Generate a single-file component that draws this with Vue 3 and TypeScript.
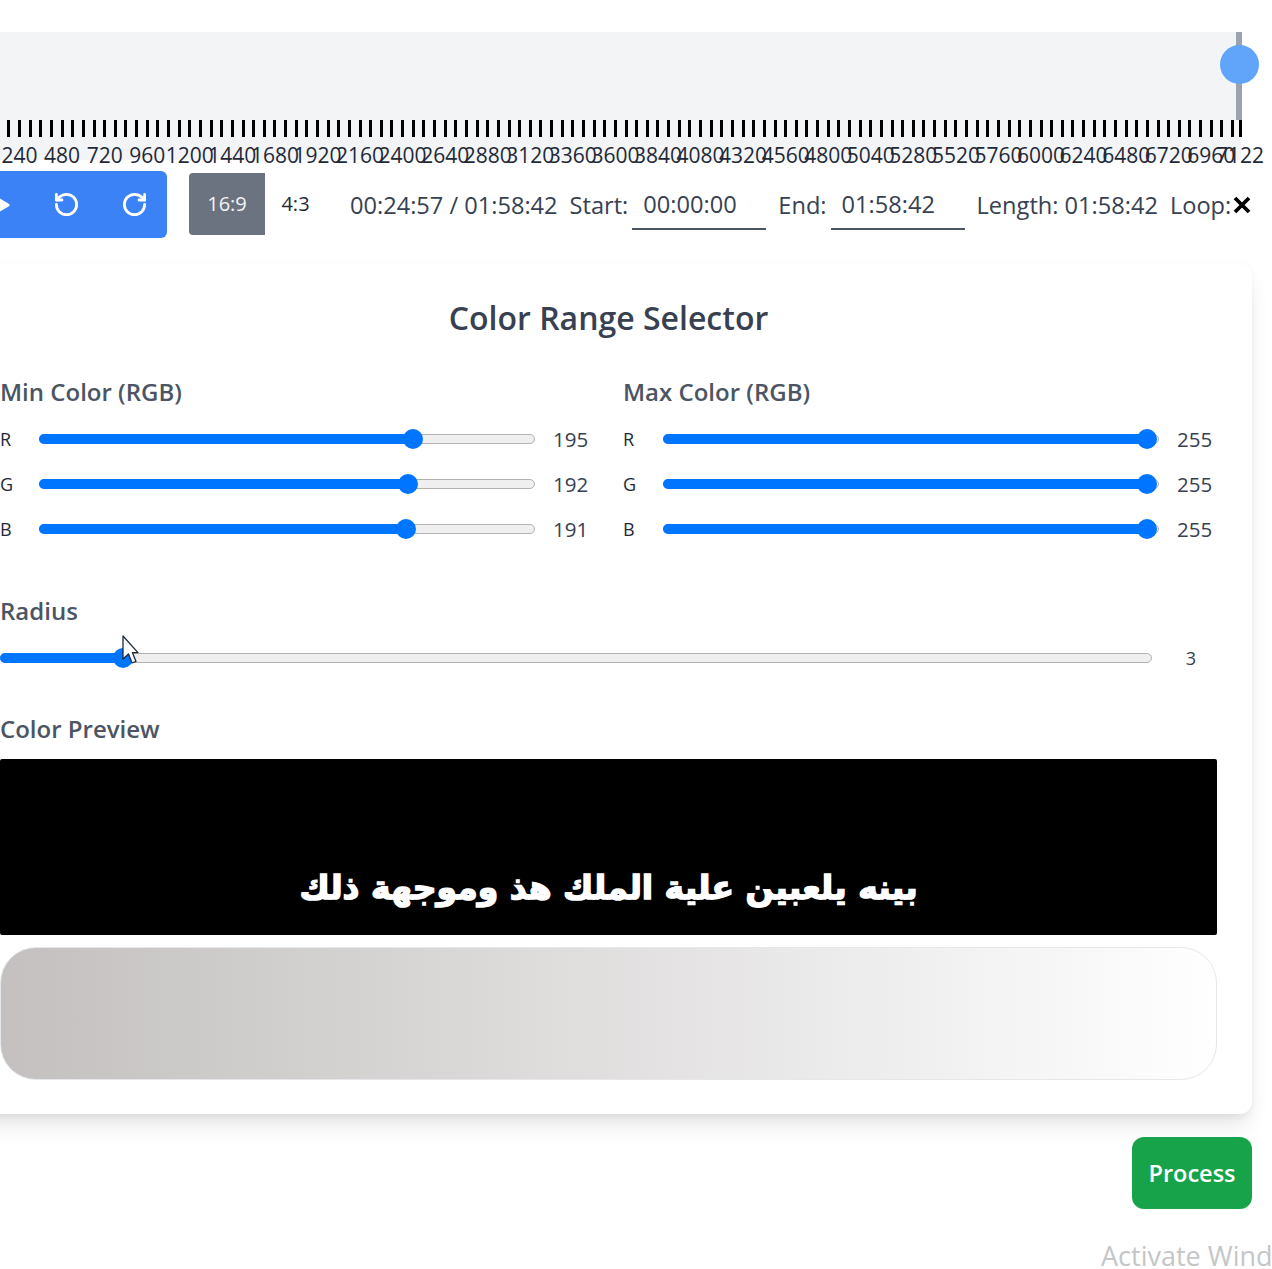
<script setup lang="ts">
const duration = 7122
const pxPerSecond = 1263 / 7122
const origin = -23
const x = (s: number) => origin + s * pxPerSecond

const ticks: number[] = []
for (let s = 0; s <= duration; s += 60) ticks.push(x(s))
ticks.push(x(duration))

const labels: { t: number; left: number }[] = []
for (let s = 240; s < duration; s += 240) labels.push({ t: s, left: x(s) })
labels.push({ t: duration, left: x(duration) })

const minRows = [
  { c: 'R', v: 195, p: 75.6 },
  { c: 'G', v: 192, p: 74.4 },
  { c: 'B', v: 191, p: 74.0 },
]
const maxRows = [
  { c: 'R', v: 255, p: 97.8 },
  { c: 'G', v: 255, p: 97.8 },
  { c: 'B', v: 255, p: 97.8 },
]
const groups = [
  { title: 'Min Color (RGB)', rows: minRows },
  { title: 'Max Color (RGB)', rows: maxRows },
]
</script>

<template>
  <div class="viewport">
    <div class="page">
      <section class="timeline">
        <div class="lane">
          <div class="playhead"></div>
          <div class="knob"></div>
        </div>
        <div class="ticks">
          <i v-for="(t, i) in ticks" :key="i" class="tick" :style="{ left: t + 36 + 'px' }"></i>
        </div>
        <div class="labels">
          <span v-for="l in labels" :key="l.t" class="tlabel" :style="{ left: l.left + 36 + 'px' }">{{ l.t }}</span>
        </div>
      </section>

      <section class="controls">
        <div class="transport">
          <svg class="play" viewBox="0 0 24 24" width="30" height="30"><path d="M6 4.5v15a1 1 0 0 0 1.5.9l12.500-7.500a1 1 0 0 0 0-1.800L7.500 3.600A1 1 0 0 0 6 4.500z" fill="#fff" /></svg>
          <svg class="ico" viewBox="0 0 24 24" width="27" height="27" fill="none" stroke="#fff" stroke-width="2.500" stroke-linecap="round" stroke-linejoin="round"><path d="M3 12a9 9 0 1 0 9-9 9.750 9.750 0 0 0-6.740 2.740L3 8" /><path d="M3 3v5h5" /></svg>
          <svg class="ico" viewBox="0 0 24 24" width="27" height="27" fill="none" stroke="#fff" stroke-width="2.500" stroke-linecap="round" stroke-linejoin="round"><path d="M21 12a9 9 0 1 1-9-9c2.520 0 4.930 1 6.740 2.740L21 8" /><path d="M21 3v5h-5" /></svg>
        </div>
        <div class="ratio active">16:9</div>
        <div class="ratio">4:3</div>
        <div class="time">00:24:57 / 01:58:42</div>
        <span class="lbl start">Start:</span>
        <div class="field">00:00:00</div>
        <span class="lbl end">End:</span>
        <div class="field">01:58:42</div>
        <span class="lbl length">Length: 01:58:42</span>
        <span class="lbl loop">Loop:</span>
        <svg class="close" viewBox="0 0 18 18" width="18" height="18"><path d="M2 2l14 14M16 2L2 16" stroke="#000" stroke-width="3.800" /></svg>
      </section>

      <section class="card">
        <h2 class="title">Color Range Selector</h2>
        <div class="columns">
          <div v-for="g in groups" :key="g.title" class="group">
            <h3 class="heading">{{ g.title }}</h3>
            <div v-for="r in g.rows" :key="r.c" class="row">
              <span class="channel">{{ r.c }}</span>
              <div class="track">
                <div class="fill" :style="{ width: r.p + '%' }"></div>
                <div class="thumb" :style="{ left: r.p + '%' }"></div>
              </div>
              <span class="value">{{ r.v }}</span>
            </div>
          </div>
        </div>

        <h3 class="heading radius-heading">Radius</h3>
        <div class="radius-row">
          <div class="track radius-track">
            <div class="fill" style="width: 10.600%"></div>
            <div class="thumb" style="left: 10.600%"></div>
            <svg class="cursor" viewBox="0 0 17 30" width="17" height="30"><path d="M1 1v23l5.500-5 3.500 9 4-1.600-3.600-8.800H16z" fill="#fff" stroke="#1f2937" stroke-width="1.300" stroke-linejoin="round" /></svg>
          </div>
          <span class="radius-value">3</span>
        </div>

        <h3 class="heading preview-heading">Color Preview</h3>
        <div class="mask"><span dir="rtl" lang="ar">بينه يلعبين علية الملك هذ وموجهة ذلك</span></div>
        <div class="gradient"></div>
      </section>

      <div class="actions">
        <button class="process" type="button">Process</button>
      </div>
    </div>
    <div class="watermark">Activate Windows</div>
  </div>
</template>

<style>
html, body { margin: 0; background: #fff; }
</style>

<style scoped>
.viewport {
  position: relative;
  width: 1272px;
  height: 1269px;
  overflow: hidden;
  background: #fff;
  font-family: "Open Sans", "Noto Sans", sans-serif;
}
.page {
  width: 1288px;
  margin-left: -36px;
  padding-top: 32px;
  box-sizing: border-box;
}
.timeline {
  position: relative;
  width: 1277px;
  height: 128px;
  background: #f3f4f6;
}
.lane {
  position: relative;
  height: 88px;
}
.playhead {
  position: absolute;
  left: 1272px;
  top: 0;
  width: 6px;
  height: 88px;
  background: #9ca3af;
}
.knob {
  position: absolute;
  left: 1256px;
  top: 13px;
  width: 39px;
  height: 39px;
  border-radius: 50%;
  background: #60a5fa;
}
.ticks {
  position: relative;
  height: 17px;
}
.tick {
  position: absolute;
  top: 0;
  width: 3px;
  height: 17px;
  margin-left: -1.500px;
  background: #000;
}
.labels {
  position: relative;
  height: 23px;
}
.tlabel {
  position: absolute;
  top: 4px;
  transform: translateX(-50%);
  font-size: 21px;
  line-height: 28px;
  color: #1f2937;
  white-space: nowrap;
}
.controls {
  display: flex;
  align-items: center;
  height: 67px;
  margin-top: 11px;
}
.transport {
  display: flex;
  align-items: center;
  width: 203px;
  height: 67px;
  box-sizing: border-box;
  padding-left: 20px;
  background: #3b82f6;
  border-radius: 0 6px 6px 0;
  flex: none;
}
.play { flex: none; }
.ico { flex: none; margin-left: 39px; }
.ico + .ico { margin-left: 41px; }
.ratio {
  display: flex;
  align-items: center;
  justify-content: center;
  width: 76px;
  height: 62px;
  margin-bottom: 2px;
  font-size: 20px;
  color: #1f2937;
  flex: none;
}
.ratio.active {
  margin-left: 22px;
  background: #6b7280;
  color: #f3f4f6;
  border-radius: 4px 0 0 4px;
}
.ratio:not(.active) { width: 61px; }
.time {
  margin-left: 24px;
  font-size: 23.600px;
  color: #374151;
  white-space: nowrap;
}
.lbl {
  font-size: 23.600px;
  color: #374151;
  white-space: nowrap;
}
.start { margin-left: 12px; }
.end { margin-left: 12px; }
.length { margin-left: 12px; }
.loop { margin-left: 12px; }
.field {
  align-self: flex-start;
  width: 134px;
  height: 59px;
  margin-left: 4px;
  padding: 0 0 0 11px;
  box-sizing: border-box;
  border-bottom: 2px solid #4b5563;
  font-size: 23.600px;
  line-height: 66px;
  color: #374151;
  flex: none;
}
.close { flex: none; margin-left: 2px; }
.card {
  width: 1288px;
  height: 850px;
  margin-top: 26px;
  padding: 36px 35px 36px 36px;
  box-sizing: border-box;
  background: #fff;
  border-radius: 12px;
  box-shadow: 0 15px 22px -4px rgba(0, 0, 0, 0.1), 0 6px 9px -3px rgba(0, 0, 0, 0.05), 0 0 8px rgba(0, 0, 0, 0.03);
}
.title {
  margin: 0;
  text-align: center;
  font-size: 32px;
  line-height: 36px;
  font-weight: 600;
  color: #374151;
}
.heading {
  margin: 0;
  font-size: 24px;
  line-height: 32px;
  font-weight: 600;
  color: #4b5563;
}
.columns {
  display: grid;
  grid-template-columns: 590px 590px;
  column-gap: 33px;
  margin-top: 40px;
}
.group .heading { margin-bottom: 8px; }
.row {
  display: flex;
  align-items: center;
  height: 45px;
}
.channel {
  width: 39px;
  flex: none;
  font-size: 18px;
  font-weight: 500;
  color: #1f2937;
}
.group:last-child .channel { width: 40px; }
.track {
  position: relative;
  width: 496px;
  height: 10px;
  flex: none;
  box-sizing: border-box;
  background: #efefef;
  border: 1px solid #b2b2b2;
  border-radius: 5px;
}
.fill {
  position: absolute;
  left: -1px;
  top: -1px;
  height: 10px;
  background: #0075ff;
  border-radius: 5px;
}
.thumb {
  position: absolute;
  top: 50%;
  width: 20px;
  height: 20px;
  border-radius: 50%;
  background: #0075ff;
  transform: translate(-50%, -50%);
}
.value {
  margin-left: 18px;
  padding-top: 1px;
  font-size: 20.500px;
  color: #374151;
}
.radius-heading { margin-top: 44px; }
.radius-row {
  display: flex;
  align-items: center;
  height: 30px;
  margin-top: 16px;
}
.radius-track { width: 1152px; }
.cursor {
  position: absolute;
  left: 121px;
  top: -19px;
}
.radius-value {
  width: 65px;
  text-align: right;
  padding-right: 21px;
  box-sizing: border-box;
  font-size: 18px;
  color: #374151;
}
.preview-heading { margin-top: 40px; }
.mask {
  display: flex;
  align-items: flex-end;
  justify-content: center;
  height: 176px;
  margin-top: 14px;
  padding-bottom: 22px;
  box-sizing: border-box;
  background: #000;
  border-radius: 2px;
  color: #fff;
  font-family: "DejaVu Sans", sans-serif;
  font-size: 33px;
  line-height: 50px;
  font-weight: 700;
  -webkit-text-stroke: 1.500px #fff;
}
.gradient {
  height: 133px;
  margin-top: 12px;
  box-sizing: border-box;
  border: 1px solid #e5e7eb;
  border-radius: 36px;
  background: linear-gradient(to right, rgb(195, 192, 191), #fff);
}
.actions {
  display: flex;
  justify-content: flex-end;
  margin-top: 23px;
}
.process {
  width: 120px;
  height: 72px;
  border: 0;
  border-radius: 12px;
  background: #16a34a;
  color: #fff;
  font-family: inherit;
  font-size: 23.500px;
  font-weight: 600;
}
.watermark {
  position: absolute;
  left: 1101px;
  top: 1238px;
  font-size: 27px;
  line-height: 36px;
  color: #c4c6c8;
  white-space: nowrap;
}
</style>
